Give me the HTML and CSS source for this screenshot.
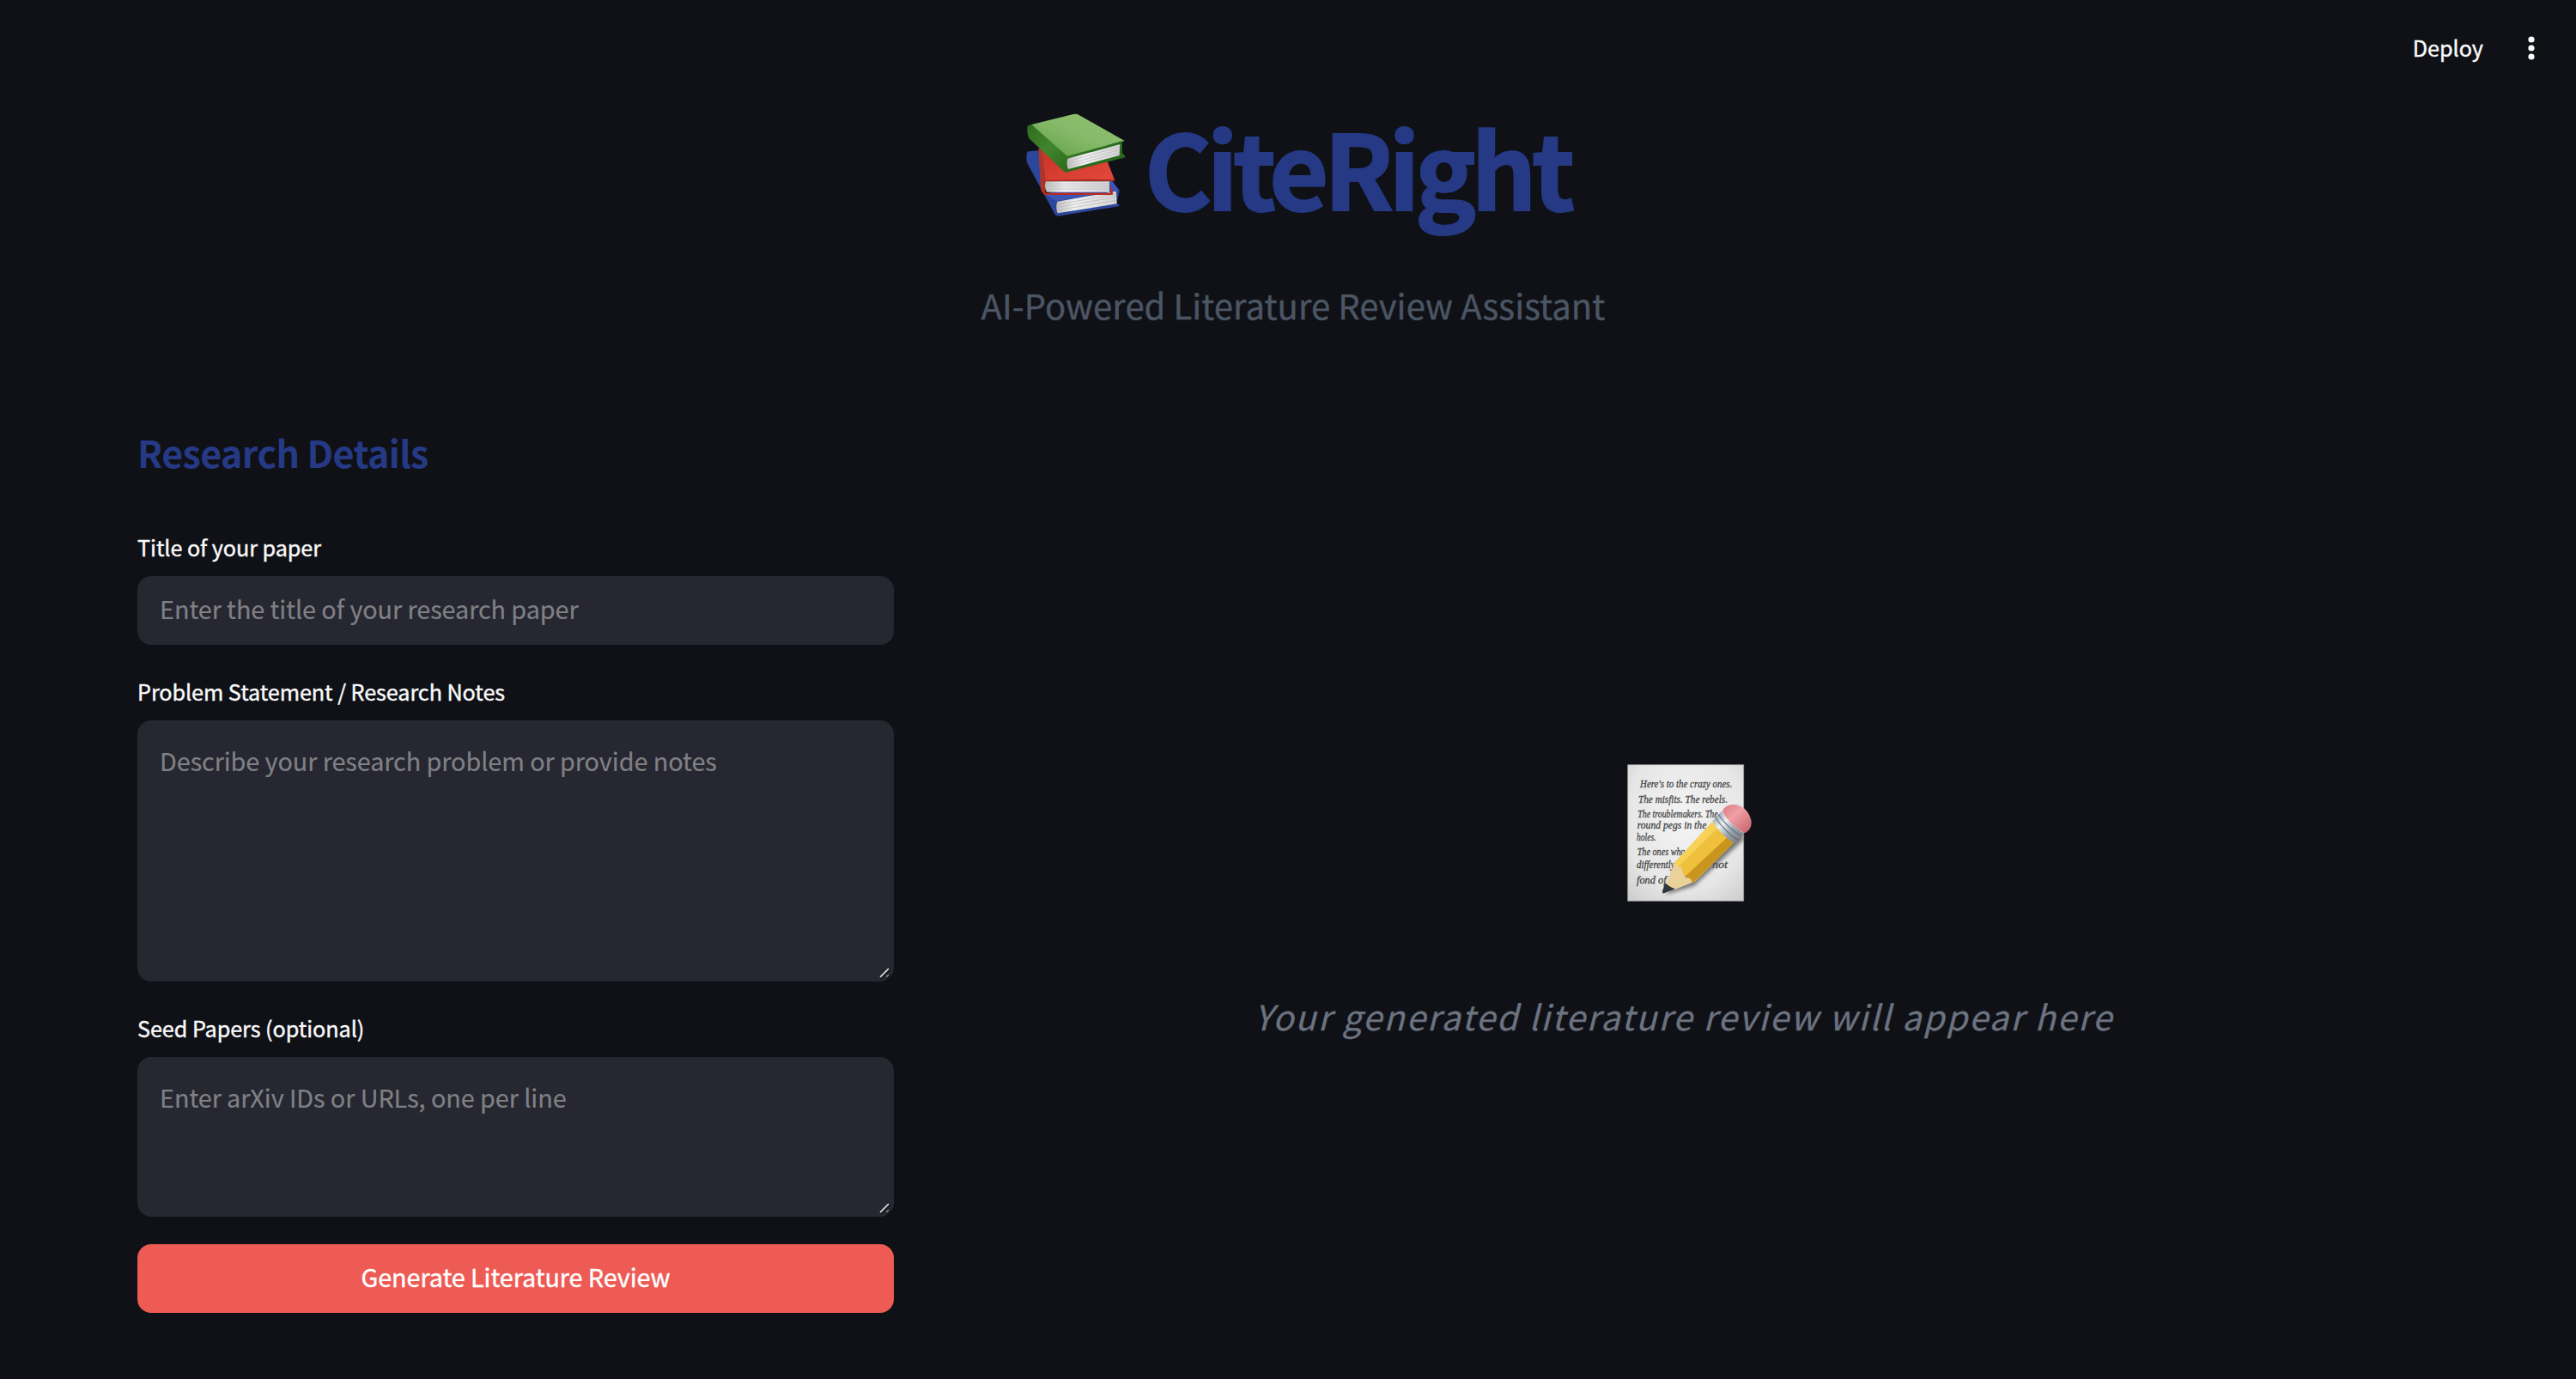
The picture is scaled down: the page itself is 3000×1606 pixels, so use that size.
FILE: index.html
```html
<!DOCTYPE html>
<html lang="en">
<head>
<meta charset="utf-8">
<title>CiteRight</title>
<link rel="stylesheet" href="styles.css">
</head>
<body>
<header class="toolbar">
  <span class="deploy">Deploy</span>
  <svg class="menu-icon" viewBox="0 0 8 28" aria-label="Menu"><circle cx="4" cy="4" r="3.6"/><circle cx="4" cy="14" r="3.6"/><circle cx="4" cy="24" r="3.6"/></svg>
</header>
<section class="hero">
  <h1 class="title">
    <svg class="books" viewBox="40 35 355 365" aria-hidden="true">
      <defs>
        <linearGradient id="green" x1="0" y1="1" x2="1" y2="0"><stop offset="0" stop-color="#5f9f45"/><stop offset=".5" stop-color="#86b969"/><stop offset="1" stop-color="#8fc46f"/></linearGradient>
        <linearGradient id="spine" gradientUnits="userSpaceOnUse" x1="50" y1="80" x2="190" y2="240"><stop offset="0" stop-color="#2f6d1c"/><stop offset=".5" stop-color="#43852e"/><stop offset="1" stop-color="#2a6a1c"/></linearGradient>
        <linearGradient id="red" x1="0" y1="0" x2="1" y2="1"><stop offset="0" stop-color="#c93327"/><stop offset="1" stop-color="#e5483b"/></linearGradient>
        <linearGradient id="pages" x1="0" y1="0" x2="1" y2="0"><stop offset="0" stop-color="#bdbdbd"/><stop offset=".3" stop-color="#f1f1f1"/><stop offset="1" stop-color="#d2d2d2"/></linearGradient>
      </defs>
      <path fill="#2c469c" d="M45 178q2-9 10-7l32-3 20 150 258-15 4 7-10 42 9 4v7l-214 34q-6-1-10-5L46 210q-3-12-1-32z"/>
      <path fill="#3d56b5" d="M105 320l44 24 220-37-27-35z"/>
      <path fill="url(#pages)" d="M152 346l206-36 2 44-207 33q-8-20-1-41z"/>
      <path stroke="#b3b3b3" stroke-width="2" fill="none" d="M155 356l202-36M155 366l202-36M155 376l202-34"/>
      <path fill="#a9372e" d="M86 163q3-5 12-3l18 110-8 50q-12-4-14-20z"/>
      <path fill="url(#red)" d="M98 166l14 106 240-2-25-64-130 25z"/>
      <path fill="#b92b20" d="M104 271l249-1v5H110q-8 20 2 41h225l1-30 9 35-8 2H112q-9-1-11-10z"/>
      <path fill="url(#pages)" d="M112 276h222v37H115q-10-18-3-37z"/>
      <path stroke="#b5b5b5" stroke-width="2" fill="none" d="M114 284h219M114 293h219M115 302h218"/>
      <path fill="url(#spine)" d="M62 77q-17 2-15 14 0 23 6 34l121 115q6 5 14 3l202-51-5-11-6-3 0-38-195 30z"/>
      <path fill="url(#green)" d="M62 77l146-36q12-2 20 3l158 89-193 53q-5 2-10-2z"/>
      <path fill="url(#pages)" d="M188 196l183-50-2 39-179 48q-7-18-2-37z"/>
      <path stroke="#b4b4b4" stroke-width="2" fill="none" d="M191 205l179-50M191 215l179-50M192 224l177-49"/>
      <path stroke="#2e7a22" stroke-width="3" fill="none" d="M184 188q5 3 9 1l194-54"/>
    </svg>
    <span class="title-text">CiteRight</span>
  </h1>
  <p class="subtitle">AI-Powered Literature Review Assistant</p>
</section>
<main class="columns">
  <form class="form">
    <h2 class="section-title">Research Details</h2>
    <label class="label" for="paper">Title of your paper</label>
    <input class="control input" id="paper" placeholder="Enter the title of your research paper">
    <label class="label" for="notes">Problem Statement / Research Notes</label>
    <div class="area">
      <textarea class="control textarea notes" id="notes" placeholder="Describe your research problem or provide notes"></textarea>
      <svg class="grip" viewBox="0 0 16 16"><path class="grip-shade" d="M2 14L13 3M9 14l4-4"/><path class="grip-line" d="M2 13L12 3"/><path class="grip-line small" d="M9 13l3-3"/></svg>
    </div>
    <label class="label" for="seeds">Seed Papers (optional)</label>
    <div class="area">
      <textarea class="control textarea seeds" id="seeds" placeholder="Enter arXiv IDs or URLs, one per line"></textarea>
      <svg class="grip" viewBox="0 0 16 16"><path class="grip-shade" d="M2 14L13 3M9 14l4-4"/><path class="grip-line" d="M2 13L12 3"/><path class="grip-line small" d="M9 13l3-3"/></svg>
    </div>
    <button class="submit" type="button">Generate Literature Review</button>
  </form>
  <section class="preview">
    <svg class="memo" viewBox="0 0 540 570" aria-hidden="true">
      <defs>
        <radialGradient id="paper-fill" cx=".5" cy=".4" r=".75"><stop offset="0" stop-color="#f4f4f4"/><stop offset=".7" stop-color="#e6e6e6"/><stop offset="1" stop-color="#cfcfcf"/></radialGradient>
        <linearGradient id="metal" x1="0" y1="0" x2="1" y2="1"><stop offset="0" stop-color="#6f7f8d"/><stop offset=".35" stop-color="#eef2f5"/><stop offset=".6" stop-color="#9aa6b0"/><stop offset="1" stop-color="#737373"/></linearGradient>
        <linearGradient id="eraser" x1="0" y1="0" x2="1" y2="1"><stop offset="0" stop-color="#d9777e"/><stop offset=".4" stop-color="#f0a0a5"/><stop offset="1" stop-color="#c25e66"/></linearGradient>
        <filter id="soft" x="-20%" y="-20%" width="140%" height="140%"><feGaussianBlur stdDeviation="6"/></filter>
        <clipPath id="sheet"><path d="M46 61h407v478H46z"/></clipPath>
      </defs>
      <path fill="url(#paper-fill)" stroke="#a6a6a6" stroke-width="2" d="M47 62h405v476H47z"/>
      <g class="script">
        <text x="90" y="142" textLength="322" lengthAdjust="spacingAndGlyphs">Here's to the crazy ones.</text>
        <text x="84" y="195" textLength="312" lengthAdjust="spacingAndGlyphs">The misfits. The rebels.</text>
        <text x="82" y="247" textLength="280" lengthAdjust="spacingAndGlyphs">The troublemakers. The</text>
        <text x="80" y="285" textLength="242" lengthAdjust="spacingAndGlyphs">round pegs in the</text>
        <text x="78" y="327" textLength="68" lengthAdjust="spacingAndGlyphs">holes.</text>
        <text x="80" y="378" textLength="168" lengthAdjust="spacingAndGlyphs">The ones who</text>
        <text x="78" y="422" textLength="134" lengthAdjust="spacingAndGlyphs">differently</text>
        <text x="342" y="422" textLength="54" lengthAdjust="spacingAndGlyphs">not</text>
        <text x="78" y="476" textLength="104" lengthAdjust="spacingAndGlyphs">fond of</text>
      </g>
      <path clip-path="url(#sheet)" filter="url(#soft)" fill="#555" opacity=".75" d="M180 515l100-30 175-165-20-30-230 190z"/>
      <path fill="#e8b830" d="M342 262l76 72-137 137-71-66z"/>
      <path fill="#f7d257" d="M342 262l22 20-142 139-12-16z"/>
      <path fill="#efc03c" d="M364 282l34 31-150 139-26-31z"/>
      <path fill="#ca951e" d="M398 313l20 21-142 139-28-21z"/>
      <path fill="#ead19a" d="M210 405q8 17 26 16 1 25 15 36 16-2 22 16l-64 26-31-15z"/>
      <path fill="#30363b" d="M178 475q20 18 35 20l-39 16q-7 2-6-8z"/>
      <path fill="url(#metal)" d="M374 225q36 50 81 78l-38 32q-50-32-74-76z"/>
      <path fill="none" stroke="#59656f" stroke-width="4" opacity=".75" d="M364 236q32 47 80 76M354 247q32 48 77 78"/>
      <path fill="url(#eraser)" d="M377 225q12-27 45-24 44 8 56 54 6 29-21 46-50-25-80-76z"/>
    </svg>
    <p class="placeholder-text">Your generated literature review will appear here</p>
  </section>
</main>
</body>
</html>
```
FILE: styles.css
```css
* { box-sizing: border-box; }
body {
  margin: 0;
  height: 1606px;
  overflow: hidden;
  background: #0f1116;
  color: #fafafa;
  font-family: "Noto Sans CJK SC", "Noto Sans", sans-serif;
}
h1, h2, p { margin: 0; }
.toolbar {
  display: flex;
  justify-content: flex-end;
  align-items: center;
  gap: 52px;
  height: 110px;
  padding-right: 48px;
}
.deploy { font-size: 25.2px; line-height: 40px; -webkit-text-stroke: .4px; }
.menu-icon { width: 8px; height: 28px; fill: #fafafa; margin-top: 2px; }
.hero { padding: 11px 0 0 12px; height: 386px; text-align: center; }
.title {
  display: flex;
  justify-content: center;
  gap: 21px;
  height: 144px;
  padding-left: 10px;
  color: #253985;
  font-size: 119.6px;
  line-height: 144px;
  font-weight: 700;
}
.title-text { letter-spacing: -5.9px; -webkit-text-stroke: 2px; }
.books { width: 118.3px; height: 121.7px; margin-top: 9.7px; }
.subtitle { margin-top: 58px; font-size: 40px; line-height: 64px; letter-spacing: .05px; color: #4b5563; -webkit-text-stroke: .4px; }
.columns {
  display: grid;
  grid-template-columns: 881px 1fr;
  gap: 32px;
  padding: 0 151px 0 160px;
}
.form { display: flex; flex-direction: column; }
.section-title {
  margin-bottom: 61px;
  color: #253985;
  font-size: 43px;
  line-height: 60px;
  font-weight: 600;
  letter-spacing: -.62px;
}
.label { height: 40px; margin-bottom: 14px; font-size: 25.2px; line-height: 40px; letter-spacing: -.06px; -webkit-text-stroke: .4px; }
.control {
  display: block;
  width: 100%;
  border: 0;
  outline: 0;
  border-radius: 16px;
  background: #262730;
  color: #fafafa;
  font: 28.8px/40px "Noto Sans CJK SC", "Noto Sans", sans-serif;
  letter-spacing: -.07px;
}
.control::placeholder { color: #808085; opacity: 1; -webkit-text-stroke: .2px; }
.input { height: 80px; margin-bottom: 34px; padding: 0 26px 6px; }
.textarea { padding: 27px 26px; resize: none; }
.notes { height: 304px; }
.seeds { height: 186px; }
.area { position: relative; margin-bottom: 34px; }
.grip { position: absolute; right: 2px; bottom: 2px; width: 16px; height: 16px; fill: none; }
.grip-shade { stroke: #111217; stroke-width: 4; }
.grip-line { stroke: #c9c9cb; stroke-width: 2; }
.grip-line.small { stroke: #77787d; }
.submit {
  height: 80px;
  margin-top: -2px;
  padding: 0 0 5px;
  border: 0;
  border-radius: 16px;
  background: #ee5a54;
  color: #fff;
  font: 28.8px/40px "Noto Sans CJK SC", "Noto Sans", sans-serif;
  letter-spacing: -.08px;
  -webkit-text-stroke: .4px;
}
.preview { display: flex; flex-direction: column; align-items: center; padding-top: 374px; }
.memo { width: 180px; height: 190px; margin-left: 17px; }
.script { fill: #444; stroke: #444; stroke-width: .8; font: italic 36px "Liberation Serif", serif; }
.placeholder-text {
  margin-top: 91px;
  color: #6b7280;
  font-size: 40px;
  line-height: 64px;
  font-style: italic;
  letter-spacing: 2px;
  white-space: nowrap;
  -webkit-text-stroke: .3px;
}
```
